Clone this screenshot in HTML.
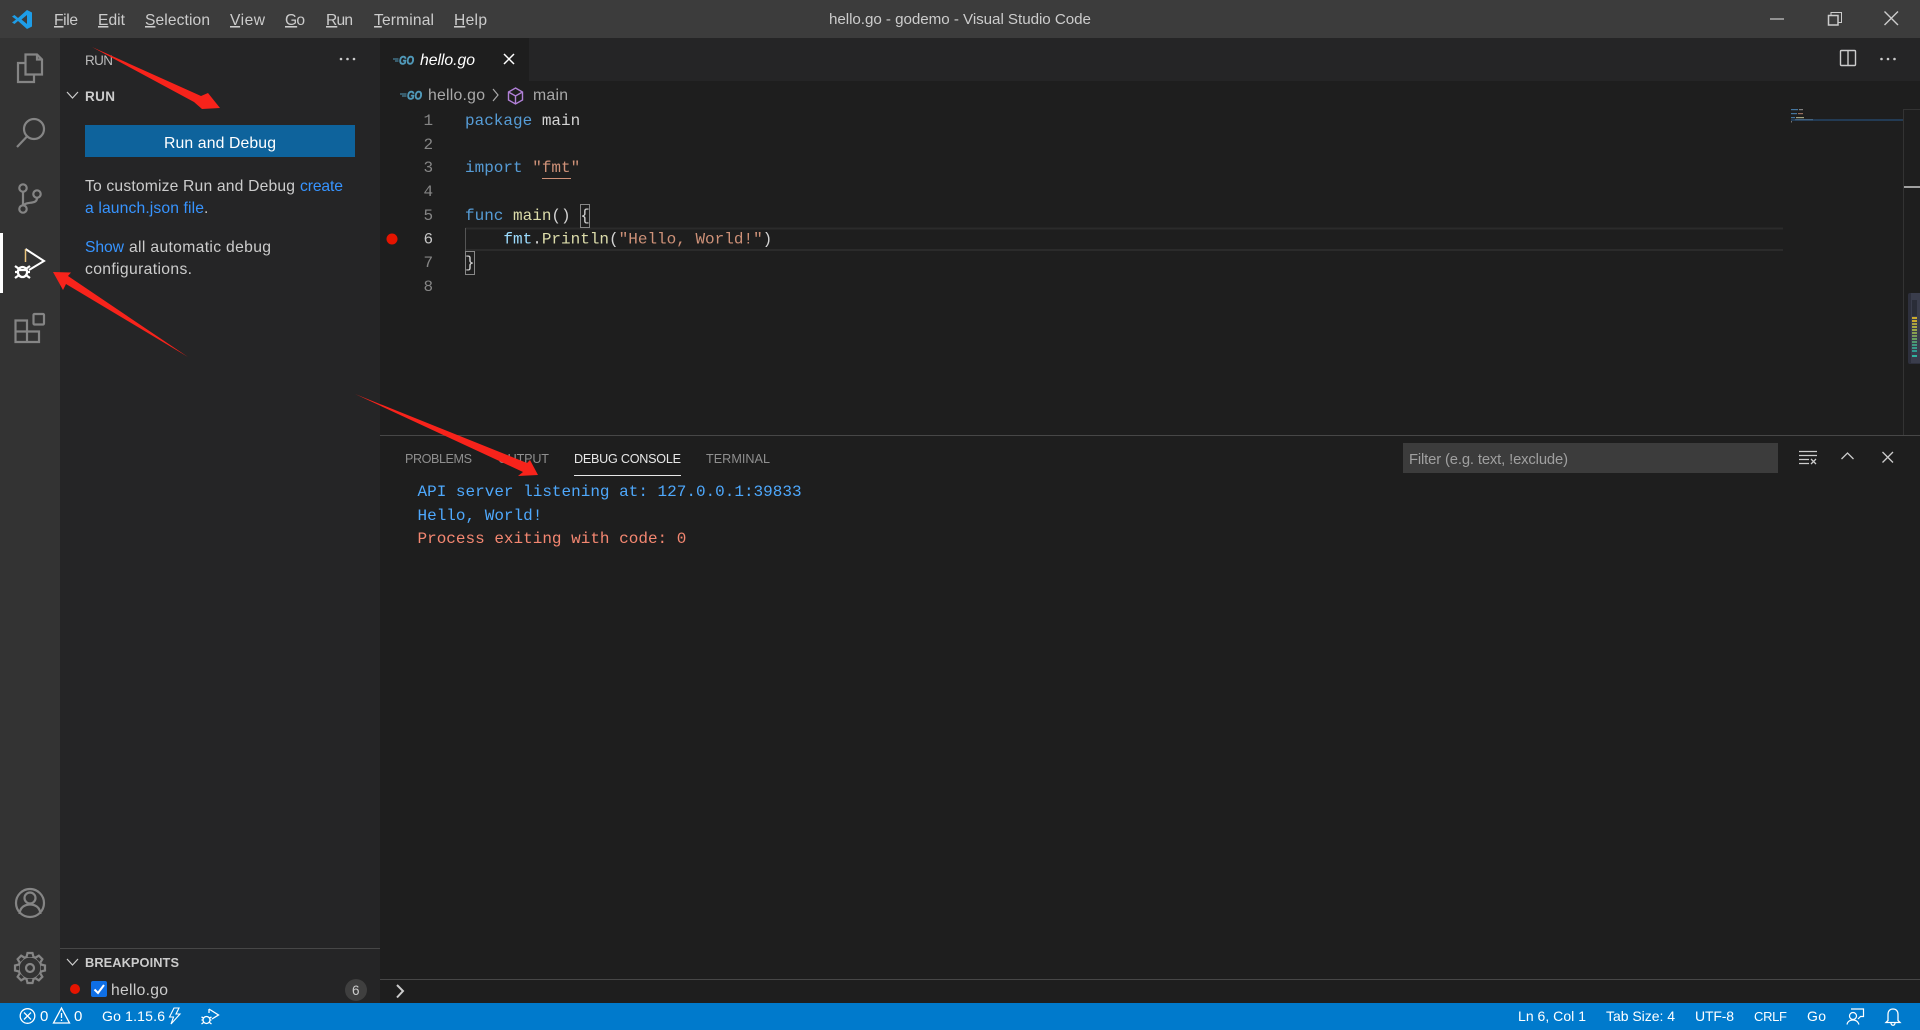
<!DOCTYPE html>
<html><head><meta charset="utf-8"><title>hello.go - godemo - Visual Studio Code</title>
<style>
html,body{margin:0;padding:0;background:#1e1e1e;width:1920px;height:1030px;overflow:hidden}
svg{display:block}
text{font-family:"Liberation Sans",sans-serif;white-space:pre}
.m{font-family:"Liberation Mono",monospace;font-size:16px}
.menu{font-size:15.6px;fill:#ccc}
.side{font-size:15.7px;fill:#ccc}
.link{fill:#3794ff}
.st{font-size:14px;fill:#fff}
.pt{font-size:12.6px;fill:#8f8f8f}
.ln{fill:#858585}
.go{font-size:11.5px;font-weight:bold;font-style:italic;fill:#519aba;stroke:#519aba;stroke-width:.5}
.ic{fill:none;stroke:#858585;stroke-width:2.2}
</style></head><body>
<svg width="1920" height="1030" viewBox="0 0 1920 1030" xmlns="http://www.w3.org/2000/svg">
<!-- backgrounds -->
<rect width="1920" height="1030" fill="#1e1e1e"/>
<rect width="1920" height="38" fill="#3c3c3c"/>
<rect y="38" width="60" height="965" fill="#333333"/>
<rect x="60" y="38" width="320" height="965" fill="#252526"/>
<rect x="380" y="38" width="1540" height="43" fill="#252526"/>
<rect x="380" y="38" width="149" height="43" fill="#1e1e1e"/>
<rect y="1003" width="1920" height="27" fill="#007acc"/>

<!-- logo -->
<path d="M27 10 L32 12.5 V26.5 L27 29 L18 21 L14.5 24 L12 22.5 L16 19.5 L12 16.5 L14.5 15 L18 18 Z M27 15 L21.5 19.5 L27 24 Z" fill="#1e9de8" fill-rule="evenodd"/>

<!-- menu -->
<text class="menu" x="54" y="25" textLength="24" lengthAdjust="spacing"><tspan text-decoration="underline">F</tspan>ile</text>
<text class="menu" x="98" y="25" textLength="27" lengthAdjust="spacing"><tspan text-decoration="underline">E</tspan>dit</text>
<text class="menu" x="145" y="25" textLength="65" lengthAdjust="spacing"><tspan text-decoration="underline">S</tspan>election</text>
<text class="menu" x="230" y="25" textLength="35" lengthAdjust="spacing"><tspan text-decoration="underline">V</tspan>iew</text>
<text class="menu" x="285" y="25" textLength="20" lengthAdjust="spacing"><tspan text-decoration="underline">G</tspan>o</text>
<text class="menu" x="326" y="25" textLength="27" lengthAdjust="spacing"><tspan text-decoration="underline">R</tspan>un</text>
<text class="menu" x="374" y="25" textLength="60" lengthAdjust="spacing"><tspan text-decoration="underline">T</tspan>erminal</text>
<text class="menu" x="454" y="25" textLength="33" lengthAdjust="spacing"><tspan text-decoration="underline">H</tspan>elp</text>
<text x="829" y="24" font-size="15.2" fill="#ccc" textLength="262" lengthAdjust="spacing">hello.go - godemo - Visual Studio Code</text>

<!-- window controls -->
<path d="M1770 19H1784" stroke="#ccc" stroke-width="1.2" fill="none"/>
<rect x="1828.5" y="15.5" width="9.5" height="9.5" fill="none" stroke="#ccc" stroke-width="1.5"/>
<path d="M1831 15V12.5H1841.5V22.5H1838" fill="none" stroke="#ccc" stroke-width="1"/>
<path d="M1884.5 11.5L1898 25M1898 11.5L1884.5 25" stroke="#ccc" stroke-width="1.4" fill="none"/>

<!-- activity bar -->
<g class="ic">
<path d="M25 63H18V82H34V75"/>
<path d="M25.5 54.5H37L42 59.5V74.5H25.5Z"/><path d="M37 54.5V59.5H42"/>
<circle cx="34" cy="129" r="10"/><path d="M27 136.500L17 147"/>
<circle cx="23" cy="188" r="3.700"/><circle cx="23" cy="209" r="3.700"/><circle cx="37" cy="194" r="3.700"/>
<path d="M23 192V205M37 198C37 205 26 201 23.500 205.500"/>
<path d="M15.500 320.500H27V342H15.500ZM15.500 331.500H39V342H27"/>
<rect x="33.500" y="314" width="10.500" height="10.500" rx="1"/>
<circle cx="30" cy="903" r="14"/><circle cx="30" cy="898" r="5.500"/><path d="M19.500 914C20 907 25 904.500 30 904.500S40 907 40.500 914"/>
</g>
<rect x="0" y="233" width="3" height="60" fill="#fff"/>
<path d="M25.500 249L44 261L29 270" fill="none" stroke="#fff" stroke-width="2"/>
<path d="M25.500 249V262" fill="none" stroke="#e8c27a" stroke-width="1.500"/>
<g fill="none" stroke="#fff" stroke-width="2.300">
<ellipse cx="22.500" cy="272" rx="4.600" ry="5"/><path d="M18 270H27M15 266L18.500 268.500M30 266L26.500 268.500M15 272H18M27 272H30M15 278L18.500 275.500M30 278L26.500 275.500"/>
</g>
<!-- gear -->
<g transform="translate(30 968)" fill="#333" stroke="#858585" stroke-width="2.200">
<circle r="11.500"/>
<path d="M-3.500 -11L-2.500 -15H2.500L3.500 -11" />
<path transform="rotate(45)" d="M-3.500 -11L-2.500 -15H2.500L3.500 -11"/>
<path transform="rotate(90)" d="M-3.500 -11L-2.500 -15H2.500L3.500 -11"/>
<path transform="rotate(135)" d="M-3.500 -11L-2.500 -15H2.500L3.500 -11"/>
<path transform="rotate(180)" d="M-3.500 -11L-2.500 -15H2.500L3.500 -11"/>
<path transform="rotate(225)" d="M-3.500 -11L-2.500 -15H2.500L3.500 -11"/>
<path transform="rotate(270)" d="M-3.500 -11L-2.500 -15H2.500L3.500 -11"/>
<path transform="rotate(315)" d="M-3.500 -11L-2.500 -15H2.500L3.500 -11"/>
<circle r="4" />
</g>

<!-- sidebar -->
<text x="85" y="65" font-size="13.500" fill="#bbb" textLength="28" lengthAdjust="spacing">RUN</text>
<g fill="#ccc"><circle cx="341" cy="59" r="1.300"/><circle cx="347.500" cy="59" r="1.300"/><circle cx="354" cy="59" r="1.300"/></g>
<path d="M67 92L72.500 98L78 92" fill="none" stroke="#ccc" stroke-width="1.200"/>
<text x="85" y="101" font-size="13.500" font-weight="bold" fill="#ccc" textLength="30" lengthAdjust="spacing">RUN</text>
<rect x="85" y="125" width="270" height="32" fill="#0e639c"/>
<text x="164" y="148" font-size="15.800" fill="#fff" textLength="112" lengthAdjust="spacing">Run and Debug</text>
<text class="side" x="85" y="191" textLength="210" lengthAdjust="spacing">To customize Run and Debug</text>
<text class="side link" x="300" y="191" textLength="43" lengthAdjust="spacing">create</text>
<text class="side link" x="85" y="213" textLength="119" lengthAdjust="spacing">a launch.json file</text>
<text class="side" x="204" y="213">.</text>
<text class="side link" x="85" y="252" textLength="39" lengthAdjust="spacing">Show</text>
<text class="side" x="129" y="252" textLength="142" lengthAdjust="spacing">all automatic debug</text>
<text class="side" x="85" y="274" textLength="107" lengthAdjust="spacing">configurations.</text>

<rect x="60" y="948" width="320" height="1" fill="#474747"/>
<path d="M67 959L72.500 965L78 959" fill="none" stroke="#ccc" stroke-width="1.200"/>
<text x="85" y="967" font-size="12.800" font-weight="bold" fill="#ccc" textLength="94" lengthAdjust="spacing">BREAKPOINTS</text>
<circle cx="75" cy="989" r="5" fill="#e51400"/>
<rect x="91" y="981" width="16" height="16" rx="2" fill="#0f6fe5"/>
<path d="M94.500 989.500L98 993L104 985" fill="none" stroke="#fff" stroke-width="2"/>
<text class="side" x="111" y="995" textLength="57" lengthAdjust="spacing">hello.go</text>
<circle cx="356" cy="990" r="11" fill="#3f3f3f"/>
<text x="352" y="995" font-size="13.500" fill="#ccc">6</text>

<!-- tab -->
<text class="go" x="399" y="64.500" textLength="15" lengthAdjust="spacingAndGlyphs">GO</text>
<path d="M393 59H398.500M395 61H398.500" stroke="#519aba" stroke-width="1"/>
<text x="420" y="65" font-size="15.800" font-style="italic" fill="#fff" textLength="55" lengthAdjust="spacing">hello.go</text>
<path d="M504 54L514 64M514 54L504 64" stroke="#fff" stroke-width="1.500" fill="none"/>
<!-- editor actions -->
<rect x="1840.500" y="50.500" width="15" height="15" rx="1" fill="none" stroke="#ccc" stroke-width="1.400"/>
<path d="M1848 50V66" stroke="#ccc" stroke-width="1.400"/>
<g fill="#ccc"><circle cx="1881.500" cy="59" r="1.300"/><circle cx="1888" cy="59" r="1.300"/><circle cx="1894.500" cy="59" r="1.300"/></g>

<!-- breadcrumbs -->
<text class="go" x="407" y="99.500" textLength="15" lengthAdjust="spacingAndGlyphs">GO</text>
<path d="M400 94H406.500M402 96H406.500" stroke="#519aba" stroke-width="1"/>
<text x="428" y="100" font-size="15.800" fill="#a9a9a9" textLength="57" lengthAdjust="spacing">hello.go</text>
<path d="M493 89L498 95L493 101" fill="none" stroke="#a9a9a9" stroke-width="1.200"/>
<path d="M515.500 88L522.500 92V100L515.500 104L508.500 100V92ZM508.500 92L515.500 96L522.500 92M515.500 96V104" fill="none" stroke="#b180d7" stroke-width="1.400"/>
<text x="533" y="100" font-size="15.800" fill="#a9a9a9" textLength="35" lengthAdjust="spacing">main</text>

<!-- code -->
<path d="M465 228.500H1783M465 250H1783" stroke="#2b2b2b" stroke-width="2" fill="none"/>
<rect x="465" y="228" width="1" height="23" fill="#555"/>
<g class="m">
<text class="m ln" x="423.500" y="125">1</text>
<text class="m ln" x="423.500" y="149">2</text>
<text class="m ln" x="423.500" y="172">3</text>
<text class="m ln" x="423.500" y="196">4</text>
<text class="m ln" x="423.500" y="220">5</text>
<text class="m" fill="#c6c6c6" x="423.500" y="243.500">6</text>
<text class="m ln" x="423.500" y="267">7</text>
<text class="m ln" x="423.500" y="291">8</text>
<text class="m" x="465" y="125" fill="#d4d4d4"><tspan fill="#569cd6">package</tspan> main</text>
<text class="m" x="465" y="172" fill="#d4d4d4"><tspan fill="#569cd6">import</tspan> <tspan fill="#ce9178">"fmt"</tspan></text>
<text class="m" x="465" y="220" fill="#d4d4d4"><tspan fill="#569cd6">func</tspan> <tspan fill="#dcdcaa">main</tspan>() {</text>
<text class="m" x="503.400" y="243.500" fill="#d4d4d4"><tspan fill="#9cdcfe">fmt</tspan>.<tspan fill="#dcdcaa">Println</tspan>(<tspan fill="#ce9178">"Hello, World!"</tspan>)</text>
<text class="m" x="465" y="267" fill="#d4d4d4">}</text>
</g>
<rect x="542" y="178" width="29" height="1" fill="#ce9178"/>
<rect x="580.500" y="204.500" width="9" height="23" fill="none" stroke="#888" stroke-width="1"/>
<rect x="465.500" y="251.500" width="9" height="23" fill="none" stroke="#888" stroke-width="1"/>
<circle cx="392" cy="239" r="5.500" fill="#e51400"/>

<!-- minimap -->
<g opacity=".7">
<rect x="1791" y="109" width="7" height="1.200" fill="#569cd6"/><rect x="1799" y="109" width="4" height="1.200" fill="#aaa"/>
<rect x="1791" y="113" width="6" height="1.200" fill="#569cd6"/><rect x="1798" y="113" width="5" height="1.200" fill="#ce9178"/>
<rect x="1791" y="117" width="4" height="1.200" fill="#569cd6"/><rect x="1796" y="117" width="8" height="1.200" fill="#dcdcaa"/>
<rect x="1795" y="119" width="18" height="1.200" fill="#8fa8b8"/>
<rect x="1791" y="121" width="1" height="1.500" fill="#999"/>
</g>
<rect x="1791" y="119" width="112" height="2" fill="#264f78" opacity=".6"/>
<rect x="1903" y="109" width="17" height="1" fill="#333"/>
<rect x="1903" y="109" width="1" height="326" fill="#333"/>
<rect x="1904" y="186" width="16" height="2" fill="#a0a0a0"/>
<rect x="1908" y="293" width="14" height="71" rx="2" fill="#2e303d"/>
<rect x="1911" y="293" width="9" height="70" fill="#3a3d4c"/>
<g>
<rect x="1912" y="300" width="5" height="16" fill="#2a2d38"/>
<rect x="1912" y="317" width="5" height="2" fill="#c9a92c"/>
<rect x="1912" y="320" width="5" height="2" fill="#c9a92c"/>
<rect x="1912" y="323" width="5" height="2" fill="#a8a040"/>
<rect x="1912" y="326" width="5" height="2" fill="#a8a840"/>
<rect x="1912" y="329" width="5" height="2" fill="#98a848"/>
<rect x="1912" y="332" width="5" height="2" fill="#88a050"/>
<rect x="1912" y="335" width="5" height="2" fill="#789a58"/>
<rect x="1912" y="338" width="5" height="2" fill="#68a060"/>
<rect x="1912" y="341" width="5" height="2" fill="#509a70"/>
<rect x="1912" y="344" width="5" height="2" fill="#409a80"/>
<rect x="1912" y="347" width="5" height="2" fill="#389a88"/>
<rect x="1912" y="350" width="5" height="2" fill="#309a90"/>
<rect x="1912" y="355" width="5" height="2" fill="#30b4a0"/>
</g>

<!-- panel -->
<rect x="380" y="435" width="1540" height="1" fill="#474747"/>
<text class="pt" x="405" y="463" textLength="67" lengthAdjust="spacing">PROBLEMS</text>
<text class="pt" x="498" y="463" textLength="51" lengthAdjust="spacing">OUTPUT</text>
<text class="pt" x="574" y="463" style="fill:#e7e7e7" textLength="107" lengthAdjust="spacing">DEBUG CONSOLE</text>
<text class="pt" x="706" y="463" textLength="64" lengthAdjust="spacing">TERMINAL</text>
<rect x="574" y="475" width="107" height="1" fill="#e7e7e7"/>
<rect x="1403" y="443" width="375" height="30" fill="#3c3c3c"/>
<text x="1409" y="464" font-size="14.800" fill="#a0a0a0" textLength="159" lengthAdjust="spacing">Filter (e.g. text, !exclude)</text>
<path d="M1799 451.500H1817M1799 455.500H1817M1799 459.500H1809M1799 463.500H1809" stroke="#ccc" stroke-width="1.200" fill="none"/>
<path d="M1811 459L1816 464M1816 459L1811 464" stroke="#ccc" stroke-width="1.300" fill="none"/>
<path d="M1841.500 459L1847.500 453L1853.500 459" stroke="#ccc" stroke-width="1.300" fill="none"/>
<path d="M1882.500 452L1893 462.500M1893 452L1882.500 462.500" stroke="#ccc" stroke-width="1.300" fill="none"/>
<text class="m" x="417.500" y="496" fill="#4ea8fc">API server listening at: 127.0.0.1:39833</text>
<text class="m" x="417.500" y="520" fill="#4ea8fc">Hello, World!</text>
<text class="m" x="417.500" y="543" fill="#f48771">Process exiting with code: 0</text>
<rect x="380" y="979" width="1540" height="1" fill="#474747"/>
<path d="M397 985L403 991L397 997.500" fill="none" stroke="#ccc" stroke-width="2"/>

<!-- status bar -->
<circle cx="27.500" cy="1016" r="7.300" fill="none" stroke="#fff" stroke-width="1.300"/>
<path d="M24 1012.500L31 1019.500M31 1012.500L24 1019.500" stroke="#fff" stroke-width="1.300"/>
<text x="40" y="1021" font-size="15" fill="#fff">0</text>
<path d="M61.500 1008L69.500 1023H53.500Z" fill="none" stroke="#fff" stroke-width="1.300"/>
<path d="M61.500 1013V1018M61.500 1019.500V1021" stroke="#fff" stroke-width="1.300"/>
<text x="74" y="1021" font-size="15" fill="#fff">0</text>
<text class="st" x="102" y="1021" textLength="63" lengthAdjust="spacing">Go 1.15.6</text>
<path d="M174 1008H179L176 1014H180L171 1024L173.500 1017H169.500Z" fill="none" stroke="#fff" stroke-width="1.100"/>
<path d="M209 1009L218.500 1015L212 1019" fill="none" stroke="#fff" stroke-width="1.300"/>
<path d="M209 1009V1013" fill="none" stroke="#fff" stroke-width="1.300"/>
<g fill="none" stroke="#fff" stroke-width="1.300"><ellipse cx="206.500" cy="1020" rx="3.500" ry="3.500"/><path d="M201.500 1017L203.500 1018M211.500 1017L209.500 1018M201.500 1020H203M210 1020H211.500M201.500 1024L203.500 1022.500M211.500 1024L209.500 1022.500"/></g>

<text class="st" x="1518" y="1021" textLength="68" lengthAdjust="spacing">Ln 6, Col 1</text>
<text class="st" x="1606" y="1021" textLength="69" lengthAdjust="spacing">Tab Size: 4</text>
<text class="st" x="1695" y="1021" textLength="39" lengthAdjust="spacing">UTF-8</text>
<text x="1754" y="1021" font-size="13" fill="#fff" textLength="33" lengthAdjust="spacing">CRLF</text>
<text class="st" x="1807" y="1021" textLength="19" lengthAdjust="spacing">Go</text>
<g fill="none" stroke="#fff" stroke-width="1.200">
<circle cx="1853" cy="1016" r="3.500"/><path d="M1847 1024.500C1847.500 1021.500 1850 1020 1853 1020S1858 1021.500 1859 1024.500"/>
<path d="M1851 1009H1863.500V1016.500H1860.500L1858 1019"/>
</g>
<path d="M1888 1020.500V1014.500C1888 1011 1890 1009 1893 1009S1898 1011 1898 1014.500V1020.500L1900 1022.500H1886ZM1891 1023C1891 1026 1895 1026 1895 1023" fill="none" stroke="#fff" stroke-width="1.300"/>

<!-- red annotation arrows -->
<g fill="#f8231b">
<polygon points="92,47 201,96 208,93 220,108 202,109 194,102"/>
<polygon points="188,357 68,276 71,272.500 53,272 63,290 66,284"/>
<polygon points="355,394 527,463 530,460 538,475 518,476 523,472"/>
</g>
</svg>
</body></html>
